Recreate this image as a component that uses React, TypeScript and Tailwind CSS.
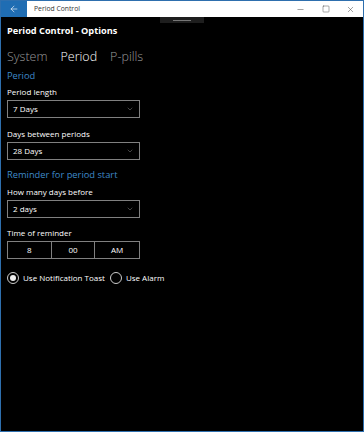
import { ArrowLeft, ChevronDown, Minus, Square, X } from 'lucide-react';

const font = { fontFamily: '"Open Sans", "Noto Sans", sans-serif' };

function Select({ value }: { value: string }) {
  return (
    <div className="flex h-[18px] w-[133px] items-center justify-between border border-[#808080] pl-[5px] pr-[5px] text-[8px] text-white">
      <span>{value}</span>
      <ChevronDown className="h-[8px] w-[8px] text-[#aaaaaa]" strokeWidth={1.2} />
    </div>
  );
}

function Label({ children }: { children: string }) {
  return <div className="mb-[3px] text-[8px] leading-[10px] text-white">{children}</div>;
}

function Radio({ checked, label }: { checked?: boolean; label: string }) {
  return (
    <div className="flex items-center gap-[4px]">
      <div className="flex h-[12px] w-[12px] items-center justify-center rounded-full border border-[#cccccc]">
        {checked && <div className="h-[6px] w-[6px] rounded-full bg-[#eeeeee]" />}
      </div>
      <span className="text-[8px] leading-[12px] text-white">{label}</span>
    </div>
  );
}

export default function App() {
  return (
    <div className="flex h-[432px] w-[364px] flex-col border border-[#2e6fae] bg-black" style={font}>
      {/* Title bar */}
      <div className="flex h-[16px] items-center bg-white">
        <div className="flex h-full w-[26px] items-center justify-center bg-[#1f6db3]">
          <ArrowLeft className="h-[10px] w-[10px] text-white" strokeWidth={1.5} />
        </div>
        <span className="ml-[7px] text-[6.8px] text-[#333333]">Period Control</span>
        <div className="ml-auto flex items-center">
          <div className="flex w-[25px] justify-center"><Minus className="h-[9px] w-[9px] text-[#333]" strokeWidth={1.2} /></div>
          <div className="flex w-[25px] justify-center"><Square className="h-[8px] w-[8px] text-[#333]" strokeWidth={1.3} /></div>
          <div className="flex w-[25px] justify-center"><X className="h-[9px] w-[9px] text-[#333]" strokeWidth={1.2} /></div>
        </div>
      </div>

      {/* drag handle */}
      <div className="flex justify-center">
        <div className="flex h-[6px] w-[44px] items-center justify-center bg-[#1e1e1e]">
          <div className="h-[1px] w-[18px] bg-[#777]" />
        </div>
      </div>

      <div className="px-[6px]">
        <div className="mt-[1px] text-[9.2px] font-bold leading-[14px] text-white">Period Control - Options</div>

        <div className="mt-[10px] flex gap-[13px] text-[12.5px] font-light leading-[18px]">
          <span className="text-[#9a9a9a]">System</span>
          <span className="text-white">Period</span>
          <span className="text-[#9a9a9a]">P-pills</span>
        </div>

        <div className="mt-[3px] text-[9.3px] leading-[14px] text-[#3f8ac9]">Period</div>

        <div className="mt-[4px]">
          <Label>Period length</Label>
          <Select value="7 Days" />
        </div>

        <div className="mt-[11px]">
          <Label>Days between periods</Label>
          <Select value="28 Days" />
        </div>

        <div className="mt-[8px] text-[9.3px] leading-[14px] text-[#3f8ac9]">Reminder for period start</div>

        <div className="mt-[5px]">
          <Label>How many days before</Label>
          <Select value="2 days" />
        </div>

        <div className="mt-[10px]">
          <Label>Time of reminder</Label>
          <div className="grid h-[18px] w-[133px] grid-cols-3 border border-[#808080] text-[8px] text-white">
            <div className="flex items-center justify-center border-r border-[#808080]">8</div>
            <div className="flex items-center justify-center border-r border-[#808080]">00</div>
            <div className="flex items-center justify-center">AM</div>
          </div>
        </div>

        <div className="mt-[13px] flex items-center gap-[5px]">
          <Radio checked label="Use Notification Toast" />
          <Radio label="Use Alarm" />
        </div>
      </div>
    </div>
  );
}
